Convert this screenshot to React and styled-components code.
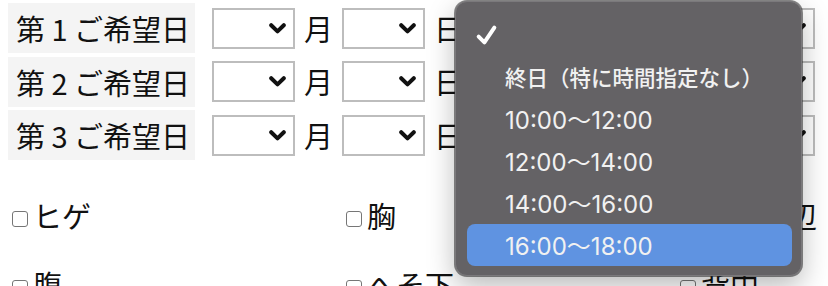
import React from "react";
import styled, { createGlobalStyle } from "styled-components";

const GlobalStyle = createGlobalStyle`
  html, body {
    margin: 0;
    padding: 0;
    background: #fff;
    overflow: hidden;
  }
  body {
    font-family: "Noto Sans CJK JP", "Noto Sans", sans-serif;
    color: #111;
  }
`;

const Page = styled.div`
  width: 828px;
  height: 286px;
  padding: 3px 0 0 8px;
  box-sizing: border-box;
  position: relative;
`;

const DateTable = styled.div`
  display: flex;
  flex-direction: column;
  gap: 3.5px;
`;

const Row = styled.div`
  display: flex;
  align-items: center;
  height: 50px;
`;

const Label = styled.div`
  width: 187px;
  height: 50px;
  box-sizing: border-box;
  padding-left: 8px;
  background: #f4f4f4;
  font-size: 29px;
  line-height: 50px;
  white-space: nowrap;
  margin-right: 17px;
`;

const SelectWrap = styled.div`
  position: relative;
`;

const SelectBox = styled.div`
  width: ${(p) => p.$w}px;
  height: 41px;
  box-sizing: border-box;
  border: 2px solid #bdbdbd;
  background: #fff;
  display: flex;
  align-items: center;
  justify-content: flex-end;
  padding-right: 7px;
`;

const Unit = styled.span`
  font-size: 29px;
  line-height: 41px;
  margin: 0 9px;
`;

const Chevron = () => (
  <svg width="17" height="11" viewBox="0 0 17 11">
    <path
      d="M2.2 2.2 L8.5 8.4 L14.8 2.2"
      fill="none"
      stroke="#111"
      strokeWidth="4"
      strokeLinecap="round"
      strokeLinejoin="round"
    />
  </svg>
);

const Select = ({ w }) => (
  <SelectBox $w={w}>
    <Chevron />
  </SelectBox>
);

const Menu = styled.div`
  position: absolute;
  left: -17px;
  top: -7px;
  width: 347px;
  height: 275px;
  box-sizing: border-box;
  padding: 12px 9px 10px 11px;
  background: #646265;
  border: 1px solid #7b797c;
  border-radius: 12px;
  box-shadow: 0 0 0 1px rgba(40, 40, 40, 0.55), 0 10px 28px rgba(0, 0, 0, 0.28);
  font-family: "Inter", "Noto Sans CJK JP", sans-serif;
  z-index: 10;
`;

const Item = styled.div`
  height: 42px;
  display: flex;
  align-items: center;
  padding-left: 38px;
  position: relative;
  border-radius: 8px;
  color: #f1f1f1;
  font-size: ${(p) => (p.$cjk ? 21.5 : 24)}px;
  font-weight: ${(p) => (p.$cjk ? 500 : 400)};
  white-space: nowrap;
  background: ${(p) => (p.$active ? "#5f93e1" : "transparent")};
`;

const Check = styled.svg`
  position: absolute;
  left: 8px;
  top: 10px;
`;

const Options = styled.div`
  display: grid;
  grid-template-columns: 334px 334px 334px;
  row-gap: 24px;
  margin-top: 33px;
`;

const Option = styled.label`
  display: flex;
  align-items: center;
  font-size: 29px;
  line-height: 45px;
  white-space: nowrap;
`;

const Box = styled.span`
  width: 16px;
  height: 16px;
  box-sizing: border-box;
  border: 1.5px solid #767676;
  border-radius: 3px;
  margin: 7px 5px 0 4px;
  background: #fff;
`;

const times = [
  "終日（特に時間指定なし）",
  "10:00〜12:00",
  "12:00〜14:00",
  "14:00〜16:00",
  "16:00〜18:00",
];

const parts = ["ヒゲ", "胸", "乳輪周辺", "腹", "へそ下", "背中"];

export default function App() {
  return (
    <>
      <GlobalStyle />
      <Page>
        <DateTable>
          {["1", "2", "3"].map((n, i) => (
            <Row key={n}>
              <Label>第 {n} ご希望日</Label>
              <Select w={83} />
              <Unit>月</Unit>
              <Select w={83} />
              <Unit>日</Unit>
              <SelectWrap>
                <Select w={343} />
                {i === 0 && (
                  <Menu>
                    <Item>
                      <Check width="23" height="23" viewBox="0 0 22 22">
                        <path
                          d="M3.5 12 L9 17.5 L18.5 3.5"
                          fill="none"
                          stroke="#fff"
                          strokeWidth="3.8"
                          strokeLinecap="round"
                          strokeLinejoin="round"
                        />
                      </Check>
                    </Item>
                    {times.map((t, k) => (
                      <Item key={t} $cjk={k === 0} $active={k === times.length - 1}>
                        {t}
                      </Item>
                    ))}
                  </Menu>
                )}
              </SelectWrap>
            </Row>
          ))}
        </DateTable>
        <Options>
          {parts.map((p) => (
            <Option key={p}>
              <Box />
              {p}
            </Option>
          ))}
        </Options>
      </Page>
    </>
  );
}
